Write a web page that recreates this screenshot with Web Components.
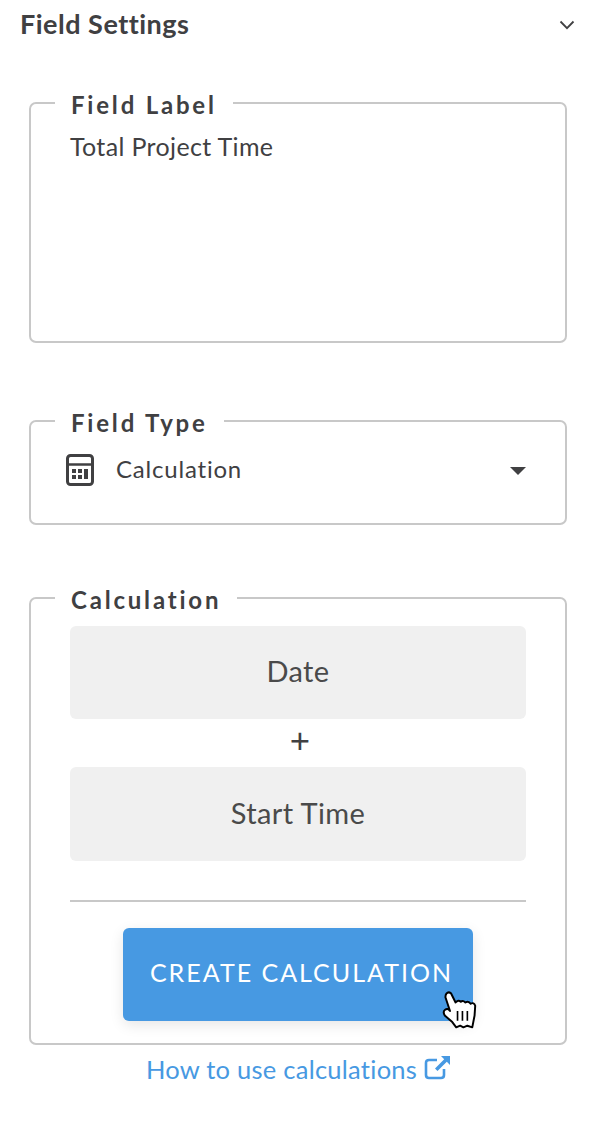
<!DOCTYPE html>
<html lang="en"><head><meta charset="utf-8"><title>Field Settings</title>
<style>
html,body{margin:0;padding:0;background:#fff}
body{font-family:Lato,"Open Sans",sans-serif;color:#404042;width:590px;height:1128px;overflow:hidden}
</style></head><body>
<settings-panel>
  <panel-header>Field Settings</panel-header>
  <field-box legend="Field Label" height="238" gap="61"><span style="font-size:25px;line-height:30px;display:block;margin-top:11px;letter-spacing:.35px">Total Project Time</span></field-box>
  <field-box legend="Field Type" height="102" gap="56"><type-select>Calculation</type-select></field-box>
  <field-box legend="Calculation" height="445" gap="0">
    <calc-token>Date</calc-token>
    <calc-plus>+</calc-plus>
    <calc-token tall>Start Time</calc-token>
    <calc-action>CREATE CALCULATION</calc-action>
  </field-box>
  <help-link>How to use calculations</help-link>
</settings-panel>
<script>
function def(name,html){customElements.define(name,class extends HTMLElement{constructor(){super();this.attachShadow({mode:'open'}).innerHTML=html}})}
def('settings-panel',`<style>:host{display:block;padding:0 23px 0 29px}</style><slot></slot>`);
def('panel-header',`<style>:host{display:flex;justify-content:space-between;align-items:center;height:50px;margin:0 -9px 36px -9px;font-size:27px;font-weight:700;color:#404042;letter-spacing:.5px}
span{display:block;margin-top:-4px}svg{display:block;width:18px;height:12px}</style><span><slot></slot></span><svg viewBox="0 0 18 12"><path d="M2.5 2.5 9 9.2 15.500 2.500" fill="none" stroke="#404042" stroke-width="1.8"/></svg>`);
customElements.define('field-box',class extends HTMLElement{constructor(){super();const r=this.attachShadow({mode:'open'});const h=this.getAttribute('height'),g=this.getAttribute('gap');
r.innerHTML=`<style>:host{display:block;margin-bottom:${g}px}
fieldset{box-sizing:border-box;margin:0;height:${+h+19}px;border:2px solid #c8c8c8;border-radius:7px;padding:0 39px;min-width:0}
legend{padding:4px 16px 0;margin-left:-15px;font-size:24px;line-height:30px;font-weight:700;letter-spacing:2.8px;color:#404042}
</style><fieldset><legend></legend><slot></slot></fieldset>`;r.querySelector('legend').textContent=this.getAttribute('legend');}});
def('type-select',`<style>:host{display:flex;align-items:center;height:50px;margin:7px 0 0 -4px;font-size:24px;color:#404042;letter-spacing:.8px}
span{display:block;margin-top:-3px}
.i{width:28px;height:32px;margin-right:22px;display:block}.c{width:16px;height:8px;margin:2px 0 0 auto;display:block}</style>
<svg class="i" viewBox="0 0 28 32"><rect x="1.500" y="1.500" width="25" height="29" rx="3" fill="none" stroke="#404042" stroke-width="3"/><path d="M2 10.500h24" stroke="#404042" stroke-width="2.500"/><g fill="#404042"><rect x="6" y="15" width="4" height="4"/><rect x="12" y="15" width="4" height="4"/><rect x="18" y="15" width="4" height="10"/><rect x="6" y="21" width="4" height="4"/><rect x="12" y="21" width="4" height="4"/></g></svg>
<span><slot></slot></span><svg class="c" viewBox="0 0 16 8"><path d="M0 0h16L8 8z" fill="#404042"/></svg>`);
customElements.define('calc-token',class extends HTMLElement{constructor(){super();const r=this.attachShadow({mode:'open'});const t=this.hasAttribute('tall');
r.innerHTML=`<style>:host{box-sizing:border-box;display:flex;align-items:center;justify-content:center;height:${t?94:93}px;margin-top:${t?0:11}px;padding-bottom:4px;background:#f0f0f0;border-radius:6px;font-size:29px;letter-spacing:.4px;color:#4a4a4a}</style><slot></slot>`;}});
def('calc-plus',`<style>:host{display:flex;align-items:center;justify-content:center;height:40px;padding:0 0 8px 4px;font-size:35px;color:#404042}</style><slot></slot>`);
def('calc-action',`<style>:host{display:flex;justify-content:center;border-top:2px solid #c8c8c8;margin-top:39px;padding-top:26px;position:relative}
.b{box-sizing:border-box;width:350px;height:93px;display:flex;align-items:center;justify-content:center;padding:0 0 6px 7px;background:#4799e2;border-radius:6px;color:#fff;font-size:25px;letter-spacing:2px;box-shadow:0 4px 14px rgba(0,0,0,.1);white-space:nowrap}
svg{position:absolute;left:373px;top:90px;width:33px;height:36px;overflow:visible}</style><div class="b"><slot></slot></div>
<svg viewBox="0 0 100 110"><path d="M10 5Q16-2 24 4L38 32Q46 22 54 30 60 24 68 32 78 26 84 36 94 30 98 42L96 72 89 108 74 103 62 108 52 103 40 108 28 92 5 72Q-2 60 6 54 14 48 21 58L7 16Q7 9 10 5Z" fill="#fff" stroke="#000" stroke-width="6" stroke-linejoin="round"/><path d="M44 58v30M59 58v30M74 58v30" stroke="#000" stroke-width="5"/></svg>`);
def('help-link',`<style>:host{display:flex;justify-content:center;align-items:center;gap:7px;height:52px;margin:-2px 0 0 0;padding-left:1px;font-size:25.500px;letter-spacing:.25px;color:#4799e2}
svg{display:block;width:27px;height:25px;margin-top:-4px}</style><slot></slot>
<svg viewBox="0 0 27 25"><path d="M13 5H5Q2 5 2 8V20Q2 23 5 23H17Q20 23 20 20V14" fill="none" stroke="#4799e2" stroke-width="2.600"/><path d="M17 1H26V10L22.800 6.800 13.500 16 11 13.500 20.200 4.200Z" fill="#4799e2"/></svg>`);
</script>
</body></html>
